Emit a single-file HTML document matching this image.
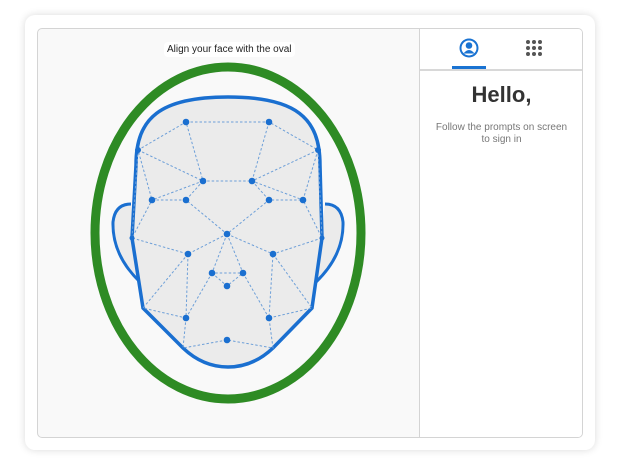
<!DOCTYPE html>
<html><head><style>
body{margin:0;width:620px;height:465px;background:#fff;font-family:"Liberation Sans",sans-serif;overflow:hidden}
.card{position:absolute;left:25px;top:15px;width:570px;height:435px;background:#fff;border-radius:10px;box-shadow:0 0 8px rgba(0,0,0,.15)}
.frame{position:absolute;left:37px;top:28px;width:544px;height:408px;border:1px solid #d4d4d4;border-radius:5px;background:#f9f9f9;overflow:hidden}
.right{position:absolute;left:381px;top:0;width:163px;height:408px;background:#fff;border-left:1px solid #d4d4d4}
.tabs{height:40px;border-bottom:2px solid #d8d8d8;position:relative}
.ul{position:absolute;left:32px;top:37px;width:34px;height:3px;background:#1a73d2}
h1{margin:0;text-align:center;font-size:22px;font-weight:bold;color:#333;margin-top:11px}
p{margin:14px 0 0;text-align:center;font-size:10px;color:#777;line-height:12px}
.lbl{position:absolute;left:164px;top:42px;font-size:10px;color:#222;background:#fff;border-radius:4px;padding:2px 3px}
</style></head><body>
<div class="card"></div>
<div class="frame">
<div class="right">
<div class="tabs">
<svg width="163" height="40" style="position:absolute;left:0;top:0">
<circle cx="49" cy="19" r="9.5" fill="#1a73d2"/><circle cx="49" cy="19" r="7.5" fill="#fff"/>
<circle cx="49" cy="16.5" r="3.3" fill="#1a73d2"/><path d="M43.5 24.5q5.5-7 11 0z" fill="#1a73d2"/>
<g fill="#555"><circle cx="108" cy="13" r="2"/><circle cx="114" cy="13" r="2"/><circle cx="120" cy="13" r="2"/><circle cx="108" cy="19" r="2"/><circle cx="114" cy="19" r="2"/><circle cx="120" cy="19" r="2"/><circle cx="108" cy="25" r="2"/><circle cx="114" cy="25" r="2"/><circle cx="120" cy="25" r="2"/></g>
</svg>
<div class="ul"></div></div>
<h1>Hello,</h1>
<p>Follow the prompts on screen<br>to sign in</p>
</div>
</div>
<svg width="620" height="465" style="position:absolute;left:0;top:0">
<ellipse cx="228" cy="233" rx="133" ry="166" fill="none" stroke="#2e8b24" stroke-width="9"/>
<path d="M131 204Q115 204 113 222Q112 255 140 282" fill="#ebebeb" stroke="#1a6fd0" stroke-width="3"/>
<path d="M325 204Q341 204 343 222Q344 255 316 282" fill="#ebebeb" stroke="#1a6fd0" stroke-width="3"/>
<path d="M228 97C160 97 136 118 136 165L132 238L143 308L183 348Q203 367 228 367Q253 367 273 348L312 308L322 238L320 165C320 118 296 97 228 97Z" fill="#ebebeb" stroke="#1a6fd0" stroke-width="3.5"/>
<g stroke="#6d9fd8" stroke-width="1" stroke-dasharray="2.5,2" fill="none">
<path d="M186 122L269 122L318 150L303 200L269 200L227 234L186 200L152 200L138 150L186 122L203 181L252 181L269 122M138 150L203 181L152 200M318 150L252 181L303 200M203 181L186 200M252 181L269 200M227 234L188 254L132 238L152 200M227 234L273 254L322 238L303 200M188 254L143 308L186 318L188 254M273 254L312 308L269 318L273 254M227 234L212 273L243 273L227 234M212 273L227 286L243 273M212 273L186 318M243 273L269 318M186 318L183 348L227 340L273 348L269 318M138 150L132 238M318 150L322 238"/>
</g>
<g fill="#1a6fd0">
<circle cx="186" cy="122" r="3.3"/><circle cx="269" cy="122" r="3.3"/><circle cx="138" cy="150" r="3"/><circle cx="318" cy="150" r="3"/>
<circle cx="203" cy="181" r="3.3"/><circle cx="252" cy="181" r="3.3"/><circle cx="152" cy="200" r="3.3"/><circle cx="186" cy="200" r="3.3"/>
<circle cx="269" cy="200" r="3.3"/><circle cx="303" cy="200" r="3.3"/><circle cx="227" cy="234" r="3.3"/><circle cx="132" cy="238" r="2.5"/><circle cx="322" cy="238" r="2.5"/>
<circle cx="188" cy="254" r="3.3"/><circle cx="273" cy="254" r="3.3"/><circle cx="212" cy="273" r="3.3"/><circle cx="243" cy="273" r="3.3"/><circle cx="227" cy="286" r="3.3"/>
<circle cx="186" cy="318" r="3.3"/><circle cx="269" cy="318" r="3.3"/><circle cx="227" cy="340" r="3.3"/>
</g>
</svg>
<div class="lbl">Align your face with the oval</div>
</body></html>
